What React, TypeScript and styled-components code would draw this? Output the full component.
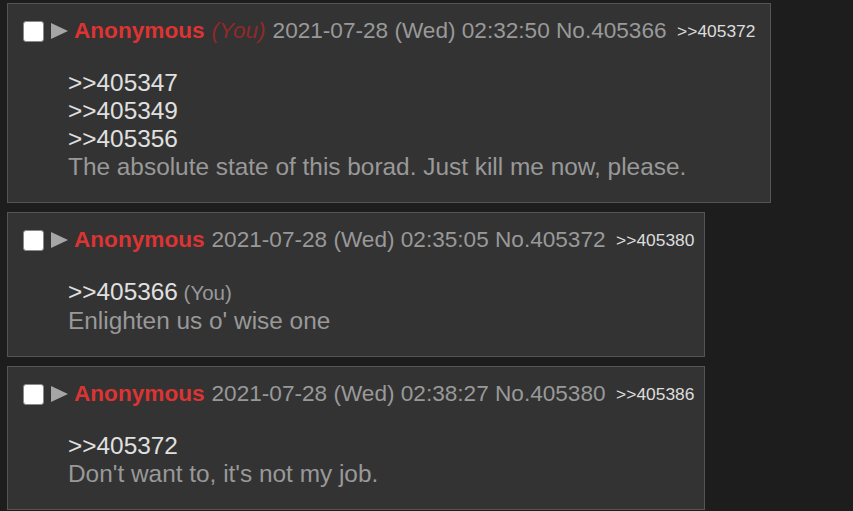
import React from "react";
import styled, { createGlobalStyle } from "styled-components";

const GlobalStyle = createGlobalStyle`
  html, body {
    margin: 0;
    padding: 0;
    background-color: #1d1d1d;
  }
  body {
    font-family: "Liberation Sans", Arial, sans-serif;
  }
`;

const Thread = styled.div`
  display: flex;
  flex-direction: column;
  align-items: flex-start;
  gap: 9px;
  padding: 3px 0 0 7px;
`;

const PostBox = styled.div<{ $padRight: number }>`
  display: inline-block;
  background-color: #333333;
  border: 1px solid #555555;
  padding: 13px ${(p) => p.$padRight}px 21px 15px;
`;

const Header = styled.div`
  display: flex;
  align-items: center;
  height: 28px;
  font-size: 22.6px;
  color: #999999;
  white-space: nowrap;
`;

const Check = styled.span`
  display: inline-block;
  width: 19px;
  height: 19px;
  background-color: #ffffff;
  border: 1px solid #8a8a8a;
  border-radius: 3px;
  margin-right: 7px;
`;

const Arrow = styled.span`
  display: inline-block;
  width: 0;
  height: 0;
  border-top: 8.5px solid transparent;
  border-bottom: 8.5px solid transparent;
  border-left: 17px solid #a6a6a6;
  margin-right: 6px;
`;

const Name = styled.span`
  font-weight: bold;
  color: #dd3333;
`;

const YouTag = styled.span`
  font-style: italic;
  color: #8f2a2a;
  margin-left: 7px;
`;

const Meta = styled.span`
  margin-left: 7px;
`;

const Backlink = styled.span`
  font-size: 17.4px;
  color: #dddddd;
  margin-left: 10.5px;
`;

const Body = styled.div`
  margin: 24px 0 0 45px;
  font-size: 24.4px;
  line-height: 28px;
  color: #999999;
`;

const Quote = styled.div`
  color: #e0e0e0;
`;

const QuoteYou = styled.span`
  font-size: 20.5px;
  color: #999999;
`;

interface PostData {
  you?: boolean;
  date: string;
  no: number;
  backlinks: number[];
  quotes: { no: number; you?: boolean }[];
  text: string;
  padRight: number;
}

const posts: PostData[] = [
  {
    you: true,
    date: "2021-07-28 (Wed) 02:32:50",
    no: 405366,
    backlinks: [405372],
    quotes: [{ no: 405347 }, { no: 405349 }, { no: 405356 }],
    text: "The absolute state of this borad. Just kill me now, please.",
    padRight: 15,
  },
  {
    date: "2021-07-28 (Wed) 02:35:05",
    no: 405372,
    backlinks: [405380],
    quotes: [{ no: 405366, you: true }],
    text: "Enlighten us o' wise one",
    padRight: 10,
  },
  {
    date: "2021-07-28 (Wed) 02:38:27",
    no: 405380,
    backlinks: [405386],
    quotes: [{ no: 405372 }],
    text: "Don't want to, it's not my job.",
    padRight: 10,
  },
];

const Post: React.FC<{ post: PostData }> = ({ post }) => (
  <PostBox $padRight={post.padRight}>
    <Header>
      <Check />
      <Arrow />
      <Name>Anonymous</Name>
      {post.you && <YouTag>(You)</YouTag>}
      <Meta>
        {post.date} No.{post.no}
      </Meta>
      {post.backlinks.map((b) => (
        <Backlink key={b}>&gt;&gt;{b}</Backlink>
      ))}
    </Header>
    <Body>
      {post.quotes.map((q) => (
        <Quote key={q.no}>
          &gt;&gt;{q.no}
          {q.you && <QuoteYou> (You)</QuoteYou>}
        </Quote>
      ))}
      <div>{post.text}</div>
    </Body>
  </PostBox>
);

const App: React.FC = () => (
  <>
    <GlobalStyle />
    <Thread>
      {posts.map((p) => (
        <Post key={p.no} post={p} />
      ))}
    </Thread>
  </>
);

export default App;
